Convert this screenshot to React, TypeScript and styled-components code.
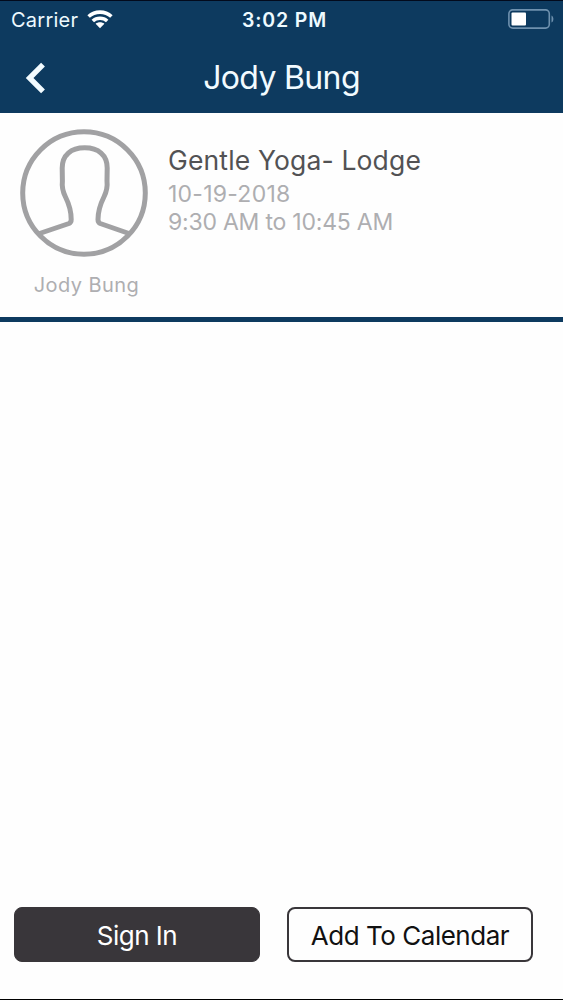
import React from "react";
import styled, { createGlobalStyle } from "styled-components";

const GlobalStyle = createGlobalStyle`
  *, *::before, *::after { box-sizing: border-box; }
  body { margin: 0; background: #fefefe; font-family: Inter, "Liberation Sans", sans-serif; }
`;

const Screen = styled.main`
  display: flex;
  flex-direction: column;
  height: 1000px;
  border-top: 1px solid #020a1c;
  border-bottom: 1px solid #000;
  background: #fefefe;
`;

const Label = styled.span<{ $size: number; $line: number; $spacing?: number; $weight?: number; $color: string }>`
  display: block;
  white-space: nowrap;
  font-size: ${(p) => p.$size}px;
  line-height: ${(p) => p.$line}px;
  letter-spacing: ${(p) => p.$spacing ?? 0}px;
  font-weight: ${(p) => p.$weight ?? 400};
  color: ${(p) => p.$color};
`;

const Header = styled.header`
  height: 112px;
  background: #0d3a5f;
`;

const StatusBar = styled.div`
  display: grid;
  grid-template-columns: 1fr auto 1fr;
  align-items: center;
  height: 37px;
  padding: 0 9px 0 11px;
`;

const Carrier = styled.div`
  display: flex;
  align-items: center;
  gap: 9px;
`;

const Clock = styled.div`
  padding-left: 4px;
`;

const BatterySlot = styled.div`
  display: flex;
  justify-content: flex-end;
  padding-bottom: 2px;
`;

const NavBar = styled.div`
  display: grid;
  grid-template-columns: 60px 1fr 60px;
  align-items: center;
  height: 75px;
`;

const BackButton = styled.button`
  display: flex;
  padding: 4px 0 0 25px;
  border: 0;
  background: none;
`;

const Title = styled.h1`
  display: flex;
  justify-content: center;
  margin: 0;
  padding-top: 5px;
`;

const ClassCard = styled.section`
  display: flex;
  height: 209px;
  padding: 16px 20px 0;
  gap: 20px;
  border-bottom: 5px solid #0d3a5f;
`;

const Instructor = styled.div`
  display: flex;
  flex-direction: column;
  align-items: center;
  width: 128px;
  gap: 15px;
`;

const InstructorName = styled.div`
  padding-left: 5px;
`;

const Details = styled.div`
  padding-top: 14px;
`;

const Schedule = styled.div`
  padding-top: 3px;
`;

const Actions = styled.footer`
  display: flex;
  gap: 27px;
  margin-top: auto;
  padding: 0 14px 37px;
`;

const ActionButton = styled.button<{ $filled?: boolean }>`
  display: flex;
  align-items: center;
  justify-content: center;
  width: 246px;
  height: 55px;
  padding: 2px 0 0;
  border: ${(p) => (p.$filled ? "1px" : "2px")} solid #39363a;
  border-radius: 8px;
  background: ${(p) => (p.$filled ? "#39363a" : "#fefefe")};
  font-family: inherit;
`;

const WifiIcon = () => (
  <svg width="26" height="20" viewBox="0 0 26 20" fill="none" stroke="#fff" strokeWidth="3.6">
    <path d="M1.6 6.5C7.8 0.7 18.2 0.7 24.4 6.5" />
    <path d="M5.8 11C9.8 7.4 16.2 7.4 20.2 11" />
    <path d="M8.6 13.8C11 11.8 15 11.8 17.4 13.8L13 18.2Z" fill="#fff" stroke="none" />
  </svg>
);

const BatteryIcon = () => (
  <svg width="46" height="20" viewBox="0 0 46 20" fill="none">
    <rect x="0.9" y="0.9" width="40.4" height="18.2" rx="3.8" stroke="#6f91ae" strokeWidth="1.6" />
    <rect x="3.5" y="3.5" width="14.5" height="13" rx="1" fill="#fff" />
    <path d="M43.5 6.5C46 7.5 46 12.5 43.5 13.5Z" fill="#6f91ae" />
  </svg>
);

const BackIcon = () => (
  <svg width="21" height="32" viewBox="0 0 21 32" fill="none" stroke="#f2fbff" strokeWidth="5.4">
    <path d="M18 2.6L4.6 16L18 29.4" />
  </svg>
);

const AvatarIcon = () => (
  <svg width="128" height="128" viewBox="0 0 128 128" fill="none" stroke="#a1a1a3" strokeWidth="5" strokeLinejoin="round">
    <circle cx="64" cy="64" r="61.3" />
    <path d="M19.5 104.5L49 94.5Q51.2 93.5 51.2 90.5C51.2 82 48.5 74 45.5 68Q41.5 60 42.4 52L42.2 39C42.2 26 51 18.8 64.7 18.8C78.4 18.8 87.2 26 87.2 39L87 52Q87.9 60 83.9 68C80.9 74 78 82 78 90.5Q78 93.5 80.2 94.5L109 104.5" />
  </svg>
);

export default function App() {
  return (
    <>
      <GlobalStyle />
      <Screen>
        <Header>
          <StatusBar>
            <Carrier>
              <Label $size={20} $line={24} $spacing={0.25} $color="#eefaff">Carrier</Label>
              <WifiIcon />
            </Carrier>
            <Clock>
              <Label $size={19.5} $line={24} $weight={600} $spacing={0.85} $color="#eefaff">3:02 PM</Label>
            </Clock>
            <BatterySlot>
              <BatteryIcon />
            </BatterySlot>
          </StatusBar>
          <NavBar>
            <BackButton aria-label="Back">
              <BackIcon />
            </BackButton>
            <Title>
              <Label $size={32} $line={40} $weight={400} $spacing={-0.65} $color="#f2fbff">Jody Bung</Label>
            </Title>
          </NavBar>
        </Header>
        <ClassCard>
          <Instructor>
            <AvatarIcon />
            <InstructorName>
              <Label $size={20} $line={26} $spacing={0.45} $color="#aeaeb1">Jody Bung</Label>
            </InstructorName>
          </Instructor>
          <Details>
            <Label $size={26.5} $line={34} $spacing={0.15} $color="#525254">Gentle Yoga- Lodge</Label>
            <Schedule>
              <Label $size={23} $line={28} $spacing={0.25} $color="#aeaeb1">10-19-2018</Label>
              <Label $size={23} $line={28} $spacing={-0.22} $color="#aeaeb1">9:30 AM to 10:45 AM</Label>
            </Schedule>
          </Details>
        </ClassCard>
        <Actions>
          <ActionButton $filled>
            <Label $size={26} $line={32} $spacing={-0.5} $color="#fff">Sign In</Label>
          </ActionButton>
          <ActionButton>
            <Label $size={26} $line={32} $spacing={-0.48} $color="#111">Add To Calendar</Label>
          </ActionButton>
        </Actions>
      </Screen>
    </>
  );
}
